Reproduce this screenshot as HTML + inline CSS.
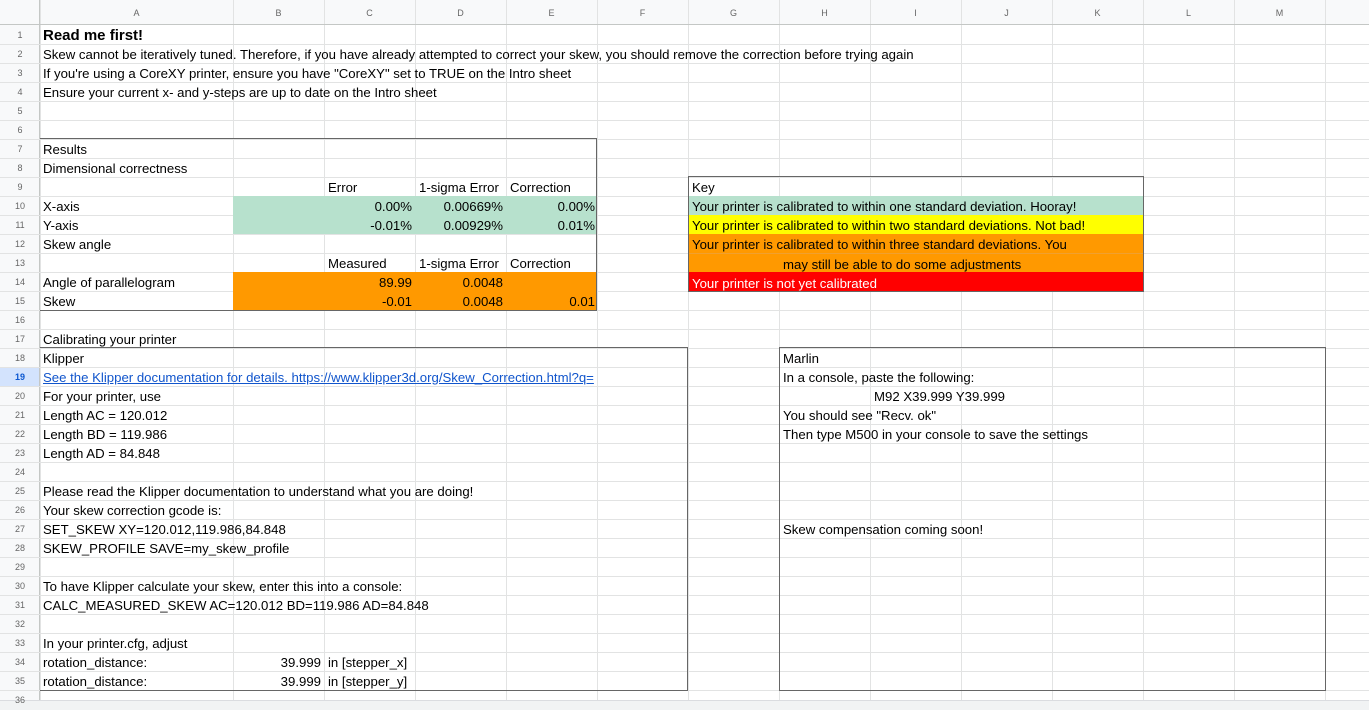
<!DOCTYPE html>
<html><head><meta charset="utf-8"><style>
body{margin:0;width:1369px;height:709px;overflow:hidden;background:#fff;font-family:"Liberation Sans",Arial,sans-serif;position:relative}
.a{position:absolute}
.t{position:absolute;font-size:13.2px;color:#000;white-space:nowrap;height:19px;line-height:21px}
.r{text-align:right}
.h{position:absolute;font-size:9px;color:#666;text-align:center}
</style></head><body>
<div class="a" style="left:0;top:0;width:1369px;height:24px;background:#f8f9fa"></div>
<div class="a" style="left:0;top:0;width:40px;height:709px;background:#f8f9fa"></div>
<div class="a" style="left:0;top:367px;width:40px;height:19px;background:#d3e3fd"></div>
<div id="g"></div>
<script>
var g=document.getElementById('g'),h='';
var xs=[40,233,324,415,506,597,688,779,870,961,1052,1143,1234,1325];
xs.forEach(function(x){h+='<div class="a" style="left:'+x+'px;top:0;width:1px;height:700px;background:#e2e3e3"></div>'});
h+='<div class="a" style="left:0;top:24px;width:1369px;height:1px;background:#c4c7c5"></div>';
h+='<div class="a" style="left:39px;top:0;width:1px;height:709px;background:#c4c7c5"></div>';
for(var n=1;n<=36;n++){var y=44+(n-1)*19;h+='<div class="a" style="left:0;top:'+y+'px;width:1369px;height:1px;background:#e2e3e3"></div>';}
g.innerHTML=h;
</script>
<div class="a" style="left:233px;top:196px;width:364px;height:38px;background:#b7e1cd"></div>
<div class="a" style="left:233px;top:272px;width:364px;height:38px;background:#ff9900"></div>
<div class="a" style="left:688px;top:196px;width:455px;height:19px;background:#b7e1cd"></div>
<div class="a" style="left:688px;top:215px;width:455px;height:19px;background:#ffff00"></div>
<div class="a" style="left:688px;top:234px;width:455px;height:38px;background:#ff9900"></div>
<div class="a" style="left:688px;top:253px;width:455px;height:1px;background:#f0a030"></div>
<div class="a" style="left:688px;top:272px;width:455px;height:19px;background:#ff0000"></div>
<div class="a" style="left:0;top:700px;width:1369px;height:9px;background:#f1f3f4;border-top:1px solid #dadce0"></div>
<!-- thick boxes -->
<div class="a" style="left:40px;top:138px;width:556px;height:171px;border-top:1.5px solid #666;border-right:1.5px solid #666;border-bottom:1.5px solid #666"></div>
<div class="a" style="left:688px;top:176px;width:454px;height:114px;border:1.5px solid #666"></div>
<div class="a" style="left:40px;top:347px;width:647px;height:342px;border-top:1.5px solid #666;border-right:1.5px solid #666;border-bottom:1.5px solid #666"></div>
<div class="a" style="left:779px;top:347px;width:545px;height:342px;border:1.5px solid #666"></div>
<!-- headers -->
<div class="h" style="left:40px;top:8px;width:193px">A</div>
<div class="h" style="left:233px;top:8px;width:91px">B</div>
<div class="h" style="left:324px;top:8px;width:91px">C</div>
<div class="h" style="left:415px;top:8px;width:91px">D</div>
<div class="h" style="left:506px;top:8px;width:91px">E</div>
<div class="h" style="left:597px;top:8px;width:91px">F</div>
<div class="h" style="left:688px;top:8px;width:91px">G</div>
<div class="h" style="left:779px;top:8px;width:91px">H</div>
<div class="h" style="left:870px;top:8px;width:91px">I</div>
<div class="h" style="left:961px;top:8px;width:91px">J</div>
<div class="h" style="left:1052px;top:8px;width:91px">K</div>
<div class="h" style="left:1143px;top:8px;width:91px">L</div>
<div class="h" style="left:1234px;top:8px;width:91px">M</div>
<div id="rh"></div>
<script>
var s='';s+='<div class="h" style="left:0;top:30px;width:40px">1</div>';
for(var n=2;n<=36;n++){var y=44+(n-2)*19+5;s+='<div class="h" style="left:0;top:'+y+'px;width:40px;'+(n==19?'font-weight:bold;color:#0b57d0':'')+'">'+n+'</div>';}
document.getElementById('rh').innerHTML=s;
</script>
<div class="t" style="left:43px;top:25px;font-weight:bold;font-size:15px;line-height:22px">Read me first!</div>
<div class="t" style="left:43px;top:44px">Skew cannot be iteratively tuned. Therefore, if you have already attempted to correct your skew, you should remove the correction before trying again</div>
<div class="t" style="left:43px;top:63px">If you're using a CoreXY printer, ensure you have "CoreXY" set to TRUE on the Intro sheet</div>
<div class="t" style="left:43px;top:82px">Ensure your current x- and y-steps are up to date on the Intro sheet</div>
<div class="t" style="left:43px;top:139px">Results</div>
<div class="t" style="left:43px;top:158px">Dimensional correctness</div>
<div class="t" style="left:328px;top:177px">Error</div>
<div class="t" style="left:419px;top:177px">1-sigma Error</div>
<div class="t" style="left:510px;top:177px">Correction</div>
<div class="t" style="left:43px;top:196px">X-axis</div>
<div class="t r" style="left:324px;top:196px;width:88px">0.00%</div>
<div class="t r" style="left:415px;top:196px;width:88px">0.00669%</div>
<div class="t r" style="left:506px;top:196px;width:89px">0.00%</div>
<div class="t" style="left:43px;top:215px">Y-axis</div>
<div class="t r" style="left:324px;top:215px;width:88px">-0.01%</div>
<div class="t r" style="left:415px;top:215px;width:88px">0.00929%</div>
<div class="t r" style="left:506px;top:215px;width:89px">0.01%</div>
<div class="t" style="left:43px;top:234px">Skew angle</div>
<div class="t" style="left:328px;top:253px">Measured</div>
<div class="t" style="left:419px;top:253px">1-sigma Error</div>
<div class="t" style="left:510px;top:253px">Correction</div>
<div class="t" style="left:43px;top:272px">Angle of parallelogram</div>
<div class="t r" style="left:324px;top:272px;width:88px">89.99</div>
<div class="t r" style="left:415px;top:272px;width:88px">0.0048</div>
<div class="t" style="left:43px;top:291px">Skew</div>
<div class="t r" style="left:324px;top:291px;width:88px">-0.01</div>
<div class="t r" style="left:415px;top:291px;width:88px">0.0048</div>
<div class="t r" style="left:506px;top:291px;width:89px">0.01</div>
<div class="t" style="left:692px;top:177px">Key</div>
<div class="t" style="left:692px;top:196px">Your printer is calibrated to within one standard deviation. Hooray!</div>
<div class="t" style="left:692px;top:215px">Your printer is calibrated to within two standard deviations. Not bad!</div>
<div class="t" style="left:692px;top:234px">Your printer is calibrated to within three standard deviations. You</div>
<div class="t" style="left:783px;top:254px">may still be able to do some adjustments</div>
<div class="t" style="left:692px;top:273px;color:#fff">Your printer is not yet calibrated</div>
<div class="t" style="left:43px;top:329px">Calibrating your printer</div>
<div class="t" style="left:43px;top:348px">Klipper</div>
<div class="t" style="left:43px;top:367px;color:#1155cc;text-decoration:underline">See the Klipper documentation for details. https://www.klipper3d.org/Skew_Correction.html?q=</div>
<div class="t" style="left:43px;top:386px">For your printer, use</div>
<div class="t" style="left:43px;top:405px">Length AC = 120.012</div>
<div class="t" style="left:43px;top:424px">Length BD = 119.986</div>
<div class="t" style="left:43px;top:443px">Length AD = 84.848</div>
<div class="t" style="left:43px;top:481px">Please read the Klipper documentation to understand what you are doing!</div>
<div class="t" style="left:43px;top:500px">Your skew correction gcode is:</div>
<div class="t" style="left:43px;top:519px">SET_SKEW XY=120.012,119.986,84.848</div>
<div class="t" style="left:43px;top:538px">SKEW_PROFILE SAVE=my_skew_profile</div>
<div class="t" style="left:43px;top:576px">To have Klipper calculate your skew, enter this into a console:</div>
<div class="t" style="left:43px;top:595px">CALC_MEASURED_SKEW AC=120.012 BD=119.986 AD=84.848</div>
<div class="t" style="left:43px;top:633px">In your printer.cfg, adjust</div>
<div class="t" style="left:43px;top:652px">rotation_distance:</div>
<div class="t r" style="left:233px;top:652px;width:88px">39.999</div>
<div class="t" style="left:328px;top:652px">in [stepper_x]</div>
<div class="t" style="left:43px;top:671px">rotation_distance:</div>
<div class="t r" style="left:233px;top:671px;width:88px">39.999</div>
<div class="t" style="left:328px;top:671px">in [stepper_y]</div>
<div class="t" style="left:783px;top:348px">Marlin</div>
<div class="t" style="left:783px;top:367px">In a console, paste the following:</div>
<div class="t" style="left:874px;top:386px">M92 X39.999 Y39.999</div>
<div class="t" style="left:783px;top:405px">You should see "Recv. ok"</div>
<div class="t" style="left:783px;top:424px">Then type M500 in your console to save the settings</div>
<div class="t" style="left:783px;top:519px">Skew compensation coming soon!</div>
</body></html>
